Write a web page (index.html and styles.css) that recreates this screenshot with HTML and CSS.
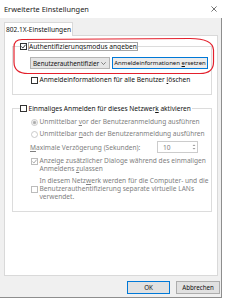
FILE: index.html
```html
<!DOCTYPE html>
<html lang="de">
<head>
<meta charset="utf-8">
<title>Erweiterte Einstellungen</title>
<link rel="stylesheet" href="styles.css">
</head>
<body>
<div class="window">
  <div class="titlebar">
    <span class="title">Erweiterte Einstellungen</span>
    <svg class="close" viewBox="0 0 7 7"><path d="M0.5 0.5 L6.5 6.5 M6.5 0.5 L0.5 6.5"/></svg>
  </div>
  <div class="client">
    <div class="tabs"><div class="tab"><span>802.1X-Einstellungen</span></div></div>
    <div class="panel">
      <fieldset class="group g1">
        <legend>
          <span class="opt legend-opt">
            <svg class="cb" viewBox="0 0 7 7"><rect x="0.5" y="0.5" width="6" height="6"/><path d="M1.4 3.6 L2.9 5 L5.6 1.7"/></svg>
            <span class="focusrect">Authentifizierungsmodus angeben</span>
          </span>
        </legend>
        <div class="combo-row">
          <div class="combo"><span class="combo-text">Benutzerauthentifizier</span><svg class="arrow" viewBox="0 0 5 3"><path d="M0.3 0.3 L2.5 2.5 L4.7 0.3"/></svg></div>
          <div class="btn btn-focus"><span>Anmeldeinformationen <u>e</u>rsetzen</span></div>
        </div>
        <div class="opt sub r-del">
          <svg class="cb" viewBox="0 0 7 7"><rect x="0.5" y="0.5" width="6" height="6"/></svg>
          <span>Anmeldeinformationen für alle Benutzer <u>l</u>öschen</span>
        </div>
      </fieldset>
      <fieldset class="group g2">
        <legend>
          <span class="opt legend-opt">
            <svg class="cb" viewBox="0 0 7 7"><rect x="0.5" y="0.5" width="6" height="6"/></svg>
            <span>Einmaliges Anmelden für dieses Netzwer<u>k</u> aktivieren</span>
          </span>
        </legend>
        <div class="opt sub disabled r-vor">
          <svg class="rb" viewBox="0 0 7 7"><circle cx="3.5" cy="3.5" r="3"/><circle class="dot" cx="3.5" cy="3.5" r="1.5"/></svg>
          <span>Unmittelbar <u>v</u>or der Benutzeranmeldung ausführen</span>
        </div>
        <div class="opt sub disabled r-nach">
          <svg class="rb" viewBox="0 0 7 7"><circle cx="3.5" cy="3.5" r="3"/></svg>
          <span>Unmittelbar <u>n</u>ach der Benutzeranmeldung ausführen</span>
        </div>
        <div class="spin-row disabled">
          <span class="spin-label"><u>M</u>aximale Verzögerung (Sekunden):</span>
          <div class="spin"><span>10</span><svg class="spin-arrows" viewBox="0 0 4 8"><path d="M0.5 3 L2 1.5 L3.5 3 Z M0.5 5 L2 6.5 L3.5 5 Z"/></svg></div>
        </div>
        <div class="opt sub disabled multi top r-anz">
          <svg class="cb" viewBox="0 0 7 7"><rect x="0.5" y="0.5" width="6" height="6"/><path d="M1.4 3.6 L2.9 5 L5.6 1.7"/></svg>
          <span>Anzeige zusätzlicher Dialoge während des einmaligen<br>Anmeldens <u>z</u>ulassen</span>
        </div>
        <div class="opt sub disabled multi r-lan">
          <svg class="cb" viewBox="0 0 7 7"><rect x="0.5" y="0.5" width="6" height="6"/></svg>
          <span>In diesem Netz<u>w</u>erk werden für die Computer- und die<br>Benutzerauthentifizierung separate virtuelle LANs<br>verwendet.</span>
        </div>
      </fieldset>
    </div>
    <div class="buttons">
      <div class="btn btn-default"><span>OK</span></div>
      <div class="btn btn-cancel"><span>Abbrechen</span></div>
    </div>
  </div>
</div>
<svg class="annot" viewBox="0 0 226 300"><path d="M22 39.5 L190 38.5 Q213 38.5 213.5 50 L213.5 62 Q213.5 73.5 200 73.5 L28 73.5 Q14 73.5 14 62 L14 47 Q14 39.5 22 39.5 Z"/></svg>
</body>
</html>
```

FILE: styles.css
```css
* { box-sizing: border-box; }
html, body { margin: 0; padding: 0; }
body {
  width: 226px;
  height: 300px;
  background: #fff;
  font-family: "Noto Sans", "Open Sans", sans-serif;
  font-size: 6.6px;
  color: #111;
  position: relative;
  overflow: hidden;
}
u { text-decoration-thickness: 0.6px; text-underline-offset: 1px; }

.window { width: 226px; height: 298px; display: flex; flex-direction: column; }

.titlebar {
  height: 18px;
  flex: none;
  display: flex;
  align-items: center;
  justify-content: space-between;
  padding: 0 9px 1px 4px;
  color: #222;
}
.title { font-size: 7.4px; }
.close { width: 6px; height: 6px; fill: none; stroke: #333; stroke-width: 0.8; }

.client {
  width: 222px;
  height: 280px;
  background: #f0f0f0;
  border-right: 1px solid #8e8e8e;
  border-bottom: 1px solid #8e8e8e;
  padding: 4px 3px 3px 4px;
  display: flex;
  flex-direction: column;
}

.tabs { display: flex; height: 14px; margin-bottom: -1px; position: relative; z-index: 1; }
.tab {
  width: 69px;
  height: 14px;
  background: #fff;
  border: 1px solid #d9d9d9;
  border-bottom: none;
  display: flex;
  align-items: center;
  justify-content: center;
  padding-bottom: 1px;
  white-space: nowrap;
}

.panel {
  height: 241px;
  flex: none;
  background: #fff;
  border: 1px solid #d9d9d9;
  padding-top: 6px;
}

.group {
  margin: 0 5px 0 7px;
  padding: 0 0 10px 7px;
  border: 1px solid #dcdcdc;
  min-inline-size: 0;
}
.g2 { margin-top: 9px; }
legend { padding: 0 1px 0 0; margin: 0; height: 9px; }

.opt { display: flex; align-items: center; gap: 1.5px; line-height: 8px; white-space: nowrap; }
.legend-opt { height: 9px; line-height: 9px; }
.sub { margin-left: 11px; }
.multi { line-height: 8px; }
.top { align-items: flex-start; }
.top .cb { margin-top: 0.5px; }

.cb { width: 7px; height: 7px; flex: none; }
.cb rect { fill: #fff; stroke: #333; stroke-width: 1; }
.cb path { fill: none; stroke: #222; stroke-width: 0.9; }
.rb { width: 7px; height: 7px; flex: none; }
.rb circle { fill: #fff; stroke: #333; stroke-width: 0.8; }
.rb .dot { fill: #333; stroke: none; }

.disabled { color: #808080; }
.disabled .cb rect, .disabled .rb circle { stroke: #bcbcbc; }
.disabled .cb path { stroke: #a0a0a0; }
.disabled .rb .dot { fill: #a8a8a8; }

.focusrect { outline: 0.8px solid #a6a6a6; outline-offset: 0; padding: 0 0.5px; line-height: 7px; }

.combo-row { display: flex; gap: 2px; margin: 6px 0 0 10px; height: 12px; }
.combo {
  width: 80px;
  height: 12px;
  background: #e5e5e5;
  border: 1px solid #b4b4b4;
  display: flex;
  align-items: center;
  padding: 0 3px 0 2px;
}
.combo-text { width: 68px; overflow: hidden; white-space: nowrap; font-size: 6.3px; }
.arrow { width: 5px; height: 3px; margin-left: auto; fill: none; stroke: #555; stroke-width: 0.7; flex: none; }

.btn {
  display: flex;
  align-items: center;
  justify-content: center;
  height: 12px;
  background: #e1e1e1;
  border: 1px solid #adadad;
  white-space: nowrap;
}
.btn-focus { width: 96px; border-color: #0078d7; background: #ececec; font-size: 6px; }

.r-del { margin-top: 7px; }
.r-vor { margin-top: 5px; }
.r-nach { margin-top: 4px; }
.spin-row { display: flex; align-items: center; height: 12px; margin: 3px 0 0 10px; white-space: nowrap; }
.spin-label { width: 127px; }
.spin {
  width: 41px;
  height: 12px;
  border: 1px solid #cccccc;
  background: #fff;
  display: flex;
  align-items: center;
  justify-content: space-between;
  padding: 0 1px 0 5px;
}
.spin-arrows { width: 4px; height: 8px; fill: #9a9a9a; }
.r-anz { margin-top: 4px; }
.r-lan { margin-top: 4px; }

.buttons { display: flex; justify-content: flex-end; gap: 6px; margin: 5px -2px 0 0; }
.buttons .btn { height: 13px; font-size: 6.2px; }
.btn-default { width: 43px; border-color: #0078d7; }
.btn-cancel { width: 44px; }

.annot {
  position: absolute;
  left: 0;
  top: 0;
  width: 226px;
  height: 300px;
  pointer-events: none;
}
.annot path { fill: none; stroke: #e3202c; stroke-width: 1.2; }
```
